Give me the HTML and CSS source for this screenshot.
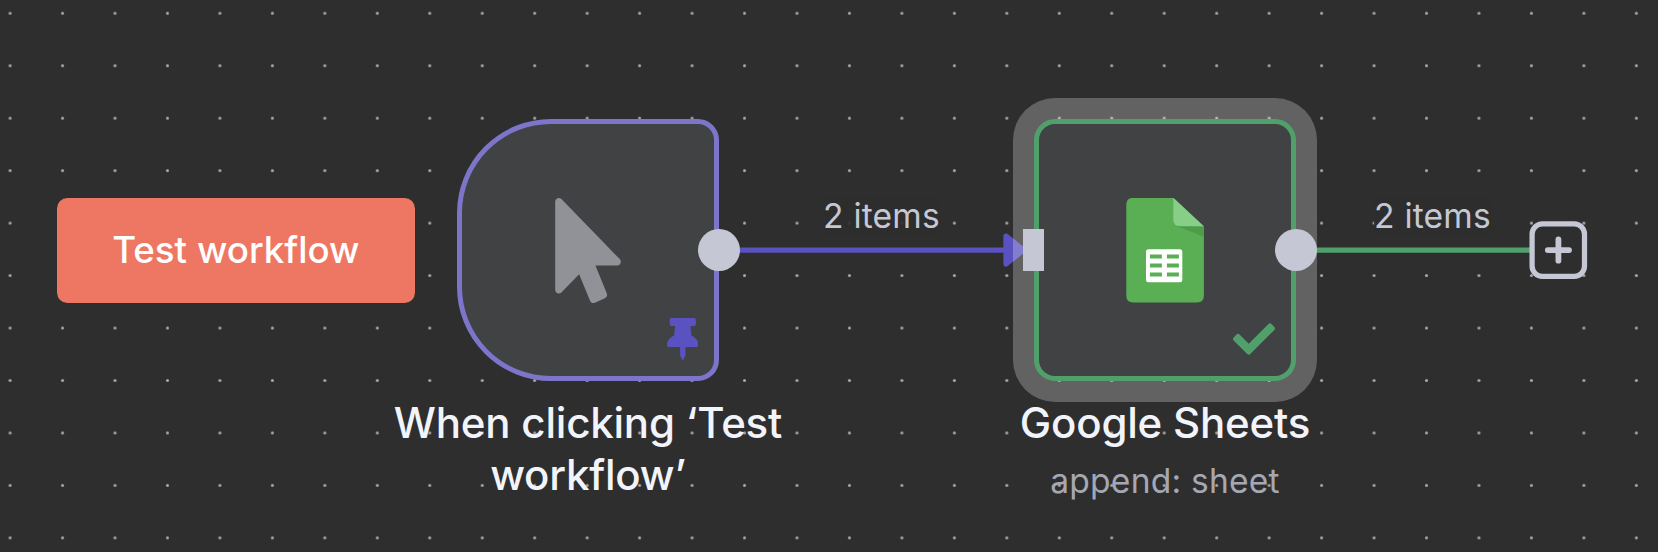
FILE: index.html
```html
<!DOCTYPE html>
<html lang="en">
<head>
<meta charset="utf-8">
<title>Workflow</title>
<link rel="stylesheet" href="styles.css">
</head>
<body>
<main class="canvas">
  <svg class="layer" width="1658" height="552">
    <defs>
      <pattern id="dots" x="-16.13" y="-12.98" width="52.46" height="52.46" patternUnits="userSpaceOnUse">
        <circle cx="26.23" cy="26.23" r="1.5" fill="#a9a9a9"/>
      </pattern>
    </defs>
    <rect width="1658" height="552" fill="url(#dots)"/>
    <path class="edge edge-pinned" d="M719 250H1010"/>
    <path class="arrow" d="M1006 236L1023.5 250L1006 264Z"/>
    <path class="edge edge-success" d="M1296 250H1532"/>
  </svg>

  <button class="run-button">Test workflow</button>

  <section class="node trigger">
    <svg class="node-icon" width="66" height="105" viewBox="0 0 320 512"><path fill="#919298" d="M302.189 329.126H196.105l55.831 135.993c3.889 9.428-.555 19.999-9.444 23.999l-49.165 21.427c-9.165 4-19.443-.571-23.332-9.714l-53.053-129.136-86.664 89.138C18.729 472.71 0 463.554 0 447.977V18.299C0 1.899 19.921-6.096 30.277 5.443l284.412 292.542c11.472 11.179 3.007 31.141-12.5 31.141z"/></svg>
    <svg class="status" width="31.5" height="42" viewBox="0 0 384 512"><path fill="#5a52c0" d="M298.028 214.267L285.793 96H328c13.255 0 24-10.745 24-24V24c0-13.255-10.745-24-24-24H56C42.745 0 32 10.745 32 24v48c0 13.255 10.745 24 24 24h42.207L85.972 214.267C37.465 236.82 0 277.261 0 328c0 13.255 10.745 24 24 24h136v104.007c0 1.242.289 2.467.845 3.578l24 48c2.941 5.882 11.364 5.893 14.311 0l24-48a8.008 8.008 0 0 0 .845-3.578V352h136c13.255 0 24-10.745 24-24-.001-51.183-37.983-91.42-85.973-113.733z"/></svg>
    <span class="output"></span>
  </section>
  <div class="caption trigger-caption"><div class="title">When clicking ‘Test workflow’</div></div>

  <section class="node sheets">
    <svg class="node-icon" width="78" height="105" viewBox="-0.3 0.2 78 105">
      <path fill="#5aaf55" d="M7 0H47L77.6 29V98Q77.6 104.6 70.6 104.6H7Q0 104.6 0 98V7Q0 0 7 0Z"/>
      <path fill="#4c9c48" d="M50 28L77.6 39V28.5Z"/>
      <path fill="#87ce86" d="M47 0L77.6 28.5H54Q47 28.5 47 21.5Z"/>
      <rect x="19.7" y="51.4" width="36.3" height="33" rx="2.5" fill="#fff"/>
      <path fill="#5aaf55" d="M23.6 56.6h12v4h-12zM40.6 56.6h12v4h-12zM23.6 65.7h12v4h-12zM40.6 65.7h12v4h-12zM23.6 74.8h12v4h-12zM40.6 74.8h12v4h-12z"/>
    </svg>
    <svg class="status" width="42" height="42" viewBox="0 0 512 512"><path fill="#51a06c" d="M173.898 439.404l-166.4-166.4c-9.997-9.997-9.997-26.206 0-36.204l36.203-36.204c9.997-9.998 26.207-9.998 36.204 0L192 312.69 432.095 72.596c9.997-9.997 26.207-9.997 36.204 0l36.203 36.204c9.997 9.997 9.997 26.206 0 36.204l-294.4 294.401c-9.998 9.997-26.207 9.997-36.204-.001z"/></svg>
    <span class="input"></span>
    <span class="output"></span>
  </section>
  <div class="caption sheets-caption">
    <div class="title">Google Sheets</div>
    <div class="subtitle">append: sheet</div>
  </div>

  <span class="edge-label label-pinned">2 items</span>
  <span class="edge-label label-success">2 items</span>

  <svg class="add" width="59" height="59" viewBox="0 0 59 59">
    <rect x="3.1" y="2.9" width="52.4" height="52.4" rx="10.3" stroke="#c5c8d4" stroke-width="5.25" fill="none"/>
    <path d="M18.8 29.1H40M29.4 18.5V39.7" stroke="#c5c8d4" stroke-width="5.8" stroke-linecap="round"/>
  </svg>
</main>
</body>
</html>
```
FILE: styles.css
```css
body {
  margin: 0;
  font-family: Inter, "Liberation Sans", sans-serif;
}

.canvas {
  position: relative;
  width: 1658px;
  height: 552px;
  overflow: hidden;
  background: #2e2e2e;
}

.layer {
  position: absolute;
  inset: 0;
}

.edge {
  fill: none;
  stroke-width: 5.25;
}

.edge-pinned {
  stroke: #5a52c0;
}

.edge-success {
  stroke: #51a06c;
}

.arrow {
  fill: #5a52c0;
  stroke: #5a52c0;
  stroke-width: 5.25;
  stroke-linejoin: round;
}

.run-button {
  position: absolute;
  left: 56.6px;
  top: 197.6px;
  width: 358.4px;
  height: 105px;
  padding: 0;
  border: 0;
  border-radius: 10.5px;
  background: #ee7763;
  color: #fff;
  font: 500 36.72px/1 Inter, "Liberation Sans", sans-serif;
}

.node {
  position: absolute;
  top: 119px;
  display: flex;
  align-items: center;
  justify-content: center;
  box-sizing: border-box;
  width: 262px;
  height: 262px;
  border: 5.25px solid;
  background: #414244;
}

.trigger {
  left: 457px;
  border-color: #7d75ca;
  border-radius: 94px 21px 21px 94px;
}

.sheets {
  left: 1034px;
  border-color: #51a06c;
  border-radius: 21px;
  box-shadow: 0 0 0 21px rgba(255, 255, 255, 0.25);
}

.status {
  position: absolute;
  right: 15.7px;
  bottom: 16px;
}

.output {
  position: absolute;
  right: -26px;
  top: 105px;
  width: 42px;
  height: 42px;
  border-radius: 50%;
  background: #c5c8d4;
}

.input {
  position: absolute;
  left: -16px;
  top: 105px;
  width: 21px;
  height: 42px;
  background: #c5c8d4;
}

.caption {
  position: absolute;
  top: 397px;
  width: 420px;
  text-align: center;
}

.trigger-caption {
  left: 378px;
}

.sheets-caption {
  left: 955px;
}

.title {
  color: #f2f4fb;
  font-size: 42px;
  font-weight: 500;
  line-height: 52.4px;
  letter-spacing: -0.2px;
}

.subtitle {
  margin-top: 10px;
  color: #a5a8b3;
  font-size: 33.6px;
  line-height: 44px;
  letter-spacing: 0.2px;
}

.edge-label {
  position: absolute;
  top: 195px;
  width: 118px;
  background: rgba(46, 46, 46, 0.9);
  color: #c5c8d4;
  font-size: 33.6px;
  line-height: 42px;
  letter-spacing: 0.2px;
  text-align: center;
}

.label-pinned {
  left: 822.5px;
}

.label-success {
  left: 1373.5px;
}

.add {
  position: absolute;
  left: 1529px;
  top: 221px;
}
```
